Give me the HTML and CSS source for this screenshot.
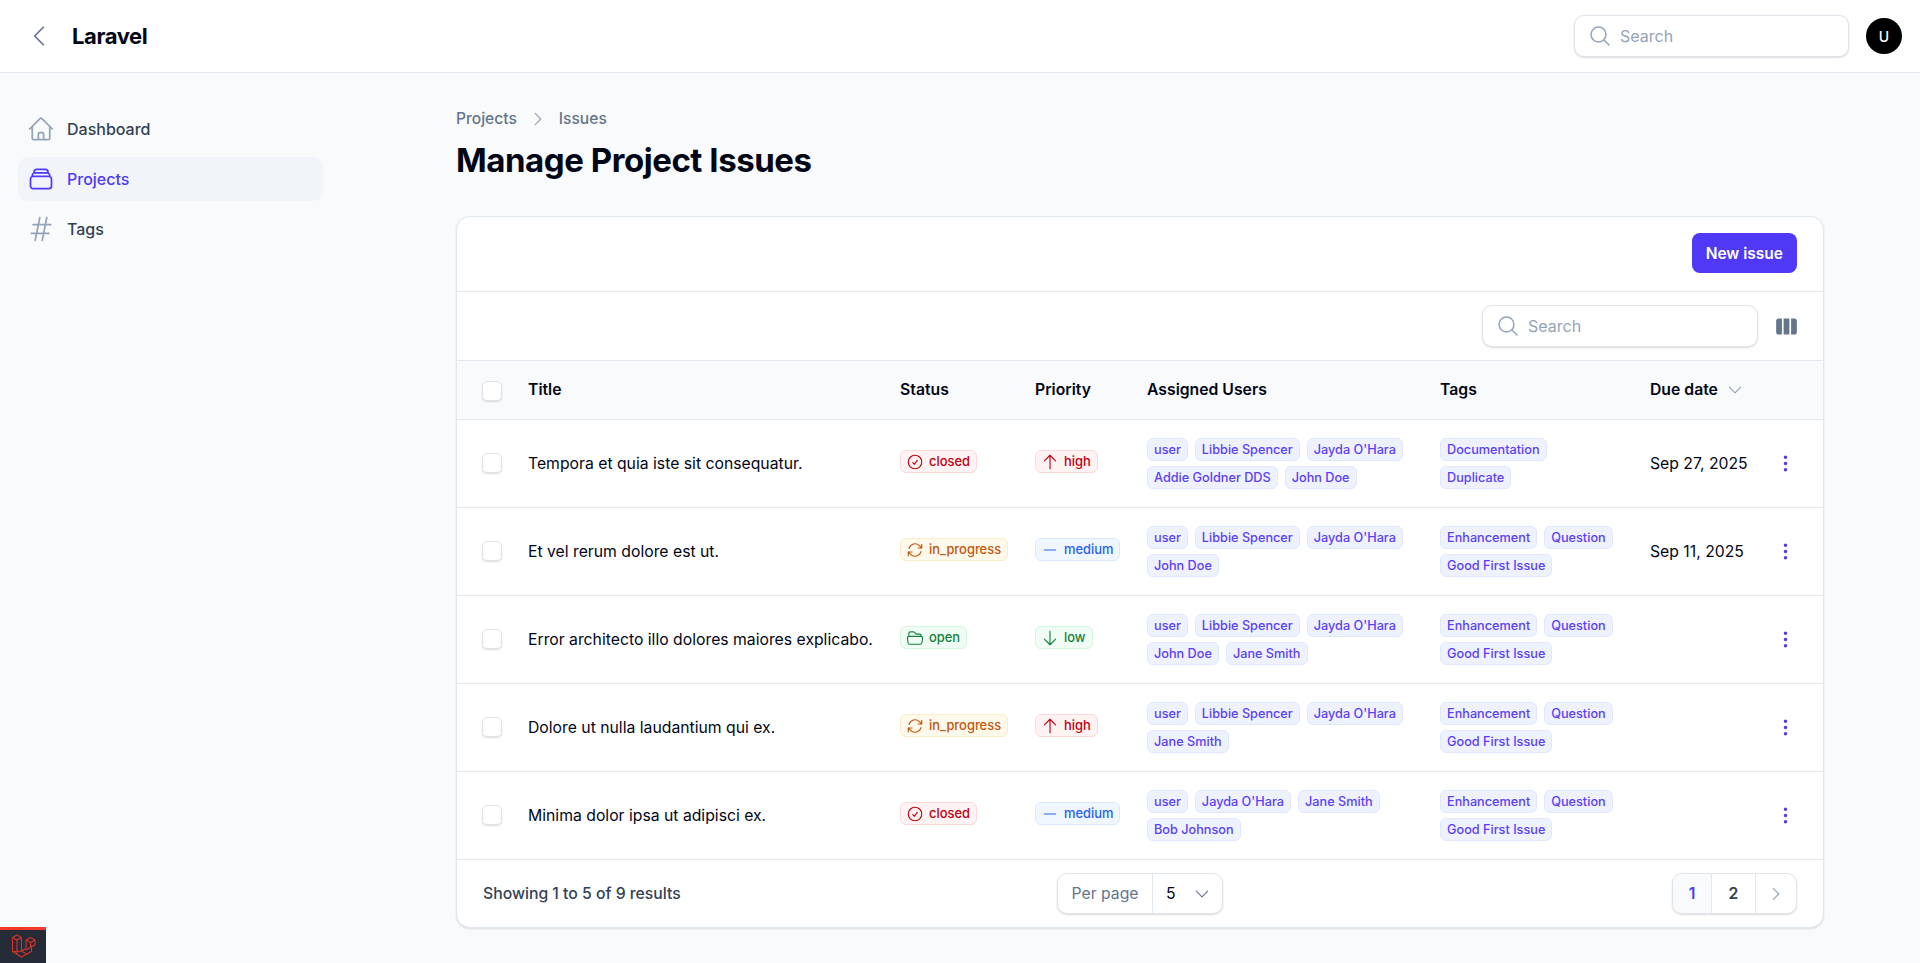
FILE: index.html
```html
<!DOCTYPE html>
<html lang="en">
<head>
    <meta charset="UTF-8">
    <meta name="viewport" content="width=device-width, initial-scale=1.0">
    <title>Manage Project Issues - Laravel</title>
    <link rel="stylesheet" href="styles.css">
</head>
<body>
    <svg class="sprite" xmlns="http://www.w3.org/2000/svg">
        <symbol id="i-home" viewBox="0 0 24 24"><path d="M2.25 12l8.954-8.955c.44-.439 1.152-.439 1.591 0L21.75 12M4.5 9.75v10.125c0 .621.504 1.125 1.125 1.125H9.75v-4.875c0-.621.504-1.125 1.125-1.125h2.25c.621 0 1.125.504 1.125 1.125V21h4.125c.621 0 1.125-.504 1.125-1.125V9.75M8.25 21h8.25"/></symbol>
        <symbol id="i-stack" viewBox="0 0 24 24"><path d="M6 6.878V6a2.25 2.25 0 012.25-2.25h7.5A2.25 2.25 0 0118 6v.878m-12 0c.235-.083.487-.128.75-.128h10.5c.263 0 .515.045.75.128m-12 0A2.25 2.25 0 004.5 9v.878m13.5-3A2.25 2.25 0 0119.5 9v.878m0 0a2.246 2.246 0 00-.75-.128H5.25c-.263 0-.515.045-.75.128m15 0A2.25 2.25 0 0121 12v6a2.25 2.25 0 01-2.25 2.25H5.25A2.25 2.25 0 013 18v-6c0-.98.626-1.813 1.5-2.122"/></symbol>
        <symbol id="i-hash" viewBox="0 0 24 24"><path d="M5.25 8.25h15m-16.5 7.5h15m-1.8-13.5l-3.9 19.5m-2.1-19.5l-3.9 19.5"/></symbol>
        <symbol id="i-search" viewBox="0 0 24 24"><path d="M21 21l-5.197-5.197m0 0A7.5 7.5 0 105.196 5.196a7.5 7.5 0 0010.607 10.607z"/></symbol>
        <symbol id="i-left" viewBox="0 0 24 24"><path d="M15.75 19.5L8.25 12l7.5-7.5"/></symbol>
        <symbol id="i-right" viewBox="0 0 24 24"><path d="M8.25 4.5l7.5 7.5-7.5 7.5"/></symbol>
        <symbol id="i-down" viewBox="0 0 24 24"><path d="M19.5 8.25l-7.5 7.5-7.5-7.5"/></symbol>
        <symbol id="i-check" viewBox="0 0 24 24"><path d="M9 12.75L11.25 15 15 9.75M21 12a9 9 0 11-18 0 9 9 0 0118 0z"/></symbol>
        <symbol id="i-refresh" viewBox="0 0 24 24"><path d="M16.023 9.348h4.992v-.001M2.985 19.644v-4.992m0 0h4.992m-4.993 0l3.181 3.183a8.25 8.25 0 0013.803-3.7M4.031 9.865a8.25 8.25 0 0113.803-3.7l3.181 3.182m0-4.991v4.99"/></symbol>
        <symbol id="i-folder" viewBox="0 0 24 24"><path d="M3.75 9.776c.112-.017.227-.026.344-.026h15.812c.117 0 .232.009.344.026m-16.5 0a2.25 2.25 0 00-1.883 2.542l.857 6a2.25 2.25 0 002.227 1.932H19.05a2.25 2.25 0 002.227-1.932l.857-6a2.25 2.25 0 00-1.883-2.542m-16.5 0V6A2.25 2.25 0 016 3.75h3.879a1.5 1.5 0 011.06.44l2.122 2.12a1.5 1.5 0 001.06.44H18A2.25 2.25 0 0120.25 9v.776"/></symbol>
        <symbol id="i-up-arrow" viewBox="0 0 24 24"><path d="M4.5 10.5L12 3m0 0l7.5 7.5M12 3v18"/></symbol>
        <symbol id="i-down-arrow" viewBox="0 0 24 24"><path d="M19.5 13.5L12 21m0 0l-7.5-7.5M12 21V3"/></symbol>
        <symbol id="i-minus" viewBox="0 0 24 24"><path d="M19.5 12h-15"/></symbol>
        <symbol id="i-columns" viewBox="0 0 20 20"><path d="M14 17h2.75A2.25 2.25 0 0019 14.75v-9.5A2.25 2.25 0 0016.75 3H14v14zM12.5 3h-5v14h5V3zM3.25 3H6v14H3.25A2.25 2.25 0 011 14.75v-9.5A2.25 2.25 0 013.25 3z"/></symbol>
        <symbol id="i-dots" viewBox="0 0 20 20"><path d="M10 3a1.5 1.5 0 110 3 1.5 1.5 0 010-3zM10 8.5a1.5 1.5 0 110 3 1.5 1.5 0 010-3zM11.5 15.5a1.5 1.5 0 10-3 0 1.5 1.5 0 003 0z"/></symbol>
    </svg>

    <header class="topbar">
        <div class="brand">
            <svg class="icon back"><use href="#i-left"/></svg>
            <span class="brand-name">Laravel</span>
        </div>
        <div class="topbar-right">
            <div class="search search-top">
                <svg class="icon"><use href="#i-search"/></svg>
                <span>Search</span>
            </div>
            <div class="avatar">U</div>
        </div>
    </header>

    <div class="layout">
        <nav class="sidebar">
            <a class="nav-item"><svg class="icon"><use href="#i-home"/></svg>Dashboard</a>
            <a class="nav-item active"><svg class="icon"><use href="#i-stack"/></svg>Projects</a>
            <a class="nav-item"><svg class="icon"><use href="#i-hash"/></svg>Tags</a>
        </nav>

        <main class="content">
            <div class="breadcrumbs">
                <span>Projects</span>
                <svg class="icon"><use href="#i-right"/></svg>
                <span>Issues</span>
            </div>
            <h1>Manage Project Issues</h1>

            <section class="card">
                <div class="card-actions">
                    <button class="btn-primary">New issue</button>
                </div>
                <div class="card-filters">
                    <div class="search search-table">
                        <svg class="icon"><use href="#i-search"/></svg>
                        <span>Search</span>
                    </div>
                    <svg class="columns-icon"><use href="#i-columns"/></svg>
                </div>

                <table class="issues">
                    <thead>
                        <tr>
                            <th class="col-check"><span class="checkbox"></span></th>
                            <th class="col-title">Title</th>
                            <th class="col-status">Status</th>
                            <th class="col-priority">Priority</th>
                            <th class="col-users">Assigned Users</th>
                            <th class="col-tags">Tags</th>
                            <th class="col-due"><span class="sort">Due date <svg class="icon"><use href="#i-down"/></svg></span></th>
                            <th class="col-menu"></th>
                        </tr>
                    </thead>
                    <tbody>
                        <tr>
                            <td><span class="checkbox"></span></td>
                            <td>Tempora et quia iste sit consequatur.</td>
                            <td><span class="badge danger"><svg class="icon"><use href="#i-check"/></svg>closed</span></td>
                            <td><span class="badge danger"><svg class="icon"><use href="#i-up-arrow"/></svg>high</span></td>
                            <td><div class="pills"><span class="pill">user</span><span class="pill">Libbie Spencer</span><span class="pill">Jayda O'Hara</span><span class="pill">Addie Goldner DDS</span><span class="pill">John Doe</span></div></td>
                            <td><div class="pills tag-pills"><span class="pill">Documentation</span><span class="pill">Duplicate</span></div></td>
                            <td>Sep 27, 2025</td>
                            <td class="menu"><svg class="dots"><use href="#i-dots"/></svg></td>
                        </tr>
                        <tr>
                            <td><span class="checkbox"></span></td>
                            <td>Et vel rerum dolore est ut.</td>
                            <td><span class="badge warning"><svg class="icon"><use href="#i-refresh"/></svg>in_progress</span></td>
                            <td><span class="badge info"><svg class="icon"><use href="#i-minus"/></svg>medium</span></td>
                            <td><div class="pills"><span class="pill">user</span><span class="pill">Libbie Spencer</span><span class="pill">Jayda O'Hara</span><span class="pill">John Doe</span></div></td>
                            <td><div class="pills tag-pills"><span class="pill">Enhancement</span><span class="pill">Question</span><span class="pill">Good First Issue</span></div></td>
                            <td>Sep 11, 2025</td>
                            <td class="menu"><svg class="dots"><use href="#i-dots"/></svg></td>
                        </tr>
                        <tr>
                            <td><span class="checkbox"></span></td>
                            <td>Error architecto illo dolores maiores explicabo.</td>
                            <td><span class="badge success"><svg class="icon"><use href="#i-folder"/></svg>open</span></td>
                            <td><span class="badge success"><svg class="icon"><use href="#i-down-arrow"/></svg>low</span></td>
                            <td><div class="pills"><span class="pill">user</span><span class="pill">Libbie Spencer</span><span class="pill">Jayda O'Hara</span><span class="pill">John Doe</span><span class="pill">Jane Smith</span></div></td>
                            <td><div class="pills tag-pills"><span class="pill">Enhancement</span><span class="pill">Question</span><span class="pill">Good First Issue</span></div></td>
                            <td></td>
                            <td class="menu"><svg class="dots"><use href="#i-dots"/></svg></td>
                        </tr>
                        <tr>
                            <td><span class="checkbox"></span></td>
                            <td>Dolore ut nulla laudantium qui ex.</td>
                            <td><span class="badge warning"><svg class="icon"><use href="#i-refresh"/></svg>in_progress</span></td>
                            <td><span class="badge danger"><svg class="icon"><use href="#i-up-arrow"/></svg>high</span></td>
                            <td><div class="pills"><span class="pill">user</span><span class="pill">Libbie Spencer</span><span class="pill">Jayda O'Hara</span><span class="pill">Jane Smith</span></div></td>
                            <td><div class="pills tag-pills"><span class="pill">Enhancement</span><span class="pill">Question</span><span class="pill">Good First Issue</span></div></td>
                            <td></td>
                            <td class="menu"><svg class="dots"><use href="#i-dots"/></svg></td>
                        </tr>
                        <tr>
                            <td><span class="checkbox"></span></td>
                            <td>Minima dolor ipsa ut adipisci ex.</td>
                            <td><span class="badge danger"><svg class="icon"><use href="#i-check"/></svg>closed</span></td>
                            <td><span class="badge info"><svg class="icon"><use href="#i-minus"/></svg>medium</span></td>
                            <td><div class="pills"><span class="pill">user</span><span class="pill">Jayda O'Hara</span><span class="pill">Jane Smith</span><span class="pill">Bob Johnson</span></div></td>
                            <td><div class="pills tag-pills"><span class="pill">Enhancement</span><span class="pill">Question</span><span class="pill">Good First Issue</span></div></td>
                            <td></td>
                            <td class="menu"><svg class="dots"><use href="#i-dots"/></svg></td>
                        </tr>
                    </tbody>
                </table>

                <footer class="card-footer">
                    <div class="results">Showing 1 to 5 of 9 results</div>
                    <div class="per-page">
                        <span class="per-label">Per page</span>
                        <span class="per-value">5<svg class="icon"><use href="#i-down"/></svg></span>
                    </div>
                    <div class="pager-wrap">
                        <div class="pager">
                            <span class="page current">1</span>
                            <span class="page">2</span>
                            <span class="page next"><svg class="icon"><use href="#i-right"/></svg></span>
                        </div>
                    </div>
                </footer>
            </section>
        </main>
    </div>

    <div class="debugbar">
        <svg viewBox="0 0 46 31">
            <path d="M12.500 7.500v14l9 5.500 10-5.500v-6M12.500 7.500l4.500-2.500 4.500 2.500v13.500l4.500-2.500M12.500 7.500l4.500 2.500 4.500-2.500M17 10v14.500M21.500 21l-9 .5M21.500 21l5 3M26 18.500V10l4.500-2.500 4.500 2.500v5l-9 5M26 10l4.500 2.500 4.500-2.500M30.500 12.500v5"/>
        </svg>
    </div>
</body>
</html>
```

FILE: styles.css
```css
* {
    box-sizing: border-box;
}
body {
    margin: 0;
    min-height: 963px;
    background-color: #f8fafc;
    color: #020617;
    font-family: Inter, "Noto Sans", sans-serif;
    font-size: 15.75px;
    overflow: hidden;
}
.sprite {
    display: none;
}
.icon {
    width: 24px;
    height: 24px;
    flex: none;
    fill: none;
    stroke: currentColor;
    stroke-width: 1.5;
    stroke-linecap: round;
    stroke-linejoin: round;
}

/* top bar */
.topbar {
    height: 73px;
    display: flex;
    align-items: center;
    justify-content: space-between;
    padding: 0 18px 0 25px;
    background: white;
    border-bottom: 1px solid #e2e8f0;
}
.brand {
    display: flex;
    align-items: center;
    gap: 19px;
}
.back {
    width: 28px;
    height: 28px;
    color: #64748b;
}
.brand-name {
    font-size: 22px;
    font-weight: 700;
    letter-spacing: -0.4px;
}
.topbar-right {
    display: flex;
    align-items: center;
    gap: 17px;
}
.avatar {
    width: 36px;
    height: 36px;
    border-radius: 50%;
    background: black;
    color: white;
    display: flex;
    align-items: center;
    justify-content: center;
    font-size: 14px;
    font-weight: 500;
}

/* search inputs */
.search {
    height: 42px;
    display: flex;
    align-items: center;
    gap: 8px;
    padding: 0 13px;
    background: white;
    border: 1px solid #dfe3ea;
    border-radius: 10px;
    box-shadow: 0 1px 2px rgba(0, 0, 0, 0.14);
    color: #94a3b8;
    font-size: 16px;
}
.search-top {
    width: 275px;
}
.search-table {
    width: 276px;
}

/* page layout */
.layout {
    display: flex;
}
.sidebar {
    width: 456px;
    flex: none;
    padding: 34px 133px 0 18px;
    display: flex;
    flex-direction: column;
    gap: 6px;
}
.nav-item {
    height: 44px;
    display: flex;
    align-items: center;
    gap: 12px;
    padding: 0 9px;
    border-radius: 10px;
    color: #334155;
    font-size: 16px;
    font-weight: 500;
}
.nav-item .icon {
    width: 28px;
    height: 28px;
    color: #94a3b8;
}
.nav-item.active {
    background: #f1f5f9;
    color: #4f39f6;
}
.nav-item.active .icon {
    color: #4f39f6;
}
.content {
    width: 1368px;
}
.breadcrumbs {
    display: flex;
    align-items: center;
    gap: 12px;
    margin-top: 36px;
    color: #64748b;
    font-size: 15.6px;
    font-weight: 500;
}
.breadcrumbs .icon {
    width: 18px;
    height: 18px;
    color: #94a3b8;
}
h1 {
    margin: 12px 0 36px;
    font-size: 33px;
    line-height: 40px;
    font-weight: 700;
    letter-spacing: -0.45px;
}

/* card */
.card {
    background: white;
    border: 1px solid #e2e8f0;
    border-radius: 14px;
    box-shadow: 0 1px 2px rgba(0, 0, 0, 0.12);
    overflow: hidden;
}
.card-actions {
    height: 75px;
    display: flex;
    align-items: center;
    justify-content: flex-end;
    padding: 0 26px 2px;
    border-bottom: 1px solid #e2e8f0;
}
.btn-primary {
    height: 40px;
    padding: 0 14px;
    border: none;
    border-radius: 8px;
    background: #4f39f6;
    color: white;
    font-family: inherit;
    font-size: 15.5px;
    font-weight: 600;
}
.card-filters {
    height: 69px;
    display: flex;
    align-items: center;
    justify-content: flex-end;
    gap: 17px;
    padding: 0 25px;
    border-bottom: 1px solid #e2e8f0;
}
.columns-icon {
    width: 23px;
    height: 23px;
    fill: #64748b;
}

/* table */
.issues {
    width: 100%;
    table-layout: fixed;
    border-collapse: collapse;
}
.issues th {
    height: 58px;
    padding: 0 12px;
    background: #f8fafc;
    text-align: left;
    font-weight: 600;
}
.issues td {
    height: 88px;
    padding: 0 12px;
    border-top: 1px solid #e2e8f0;
}
.col-check {
    width: 59px;
}
.col-title {
    width: 372px;
}
.col-status {
    width: 135px;
}
.col-priority {
    width: 112px;
}
.col-users {
    width: 293px;
}
.col-tags {
    width: 210px;
}
.col-due {
    width: 130px;
}
.issues th.col-check,
.issues td:first-child {
    padding: 0 0 0 25px;
}
.checkbox {
    display: block;
    width: 20px;
    height: 20px;
    background: white;
    border: 1px solid #dfe3ea;
    border-radius: 5px;
    box-shadow: 0 1px 2px rgba(0, 0, 0, 0.14);
}
.issues th .checkbox {
    margin-top: 2px;
}
.sort {
    display: inline-flex;
    align-items: center;
    gap: 8px;
    white-space: nowrap;
}
.sort .icon {
    width: 18px;
    height: 18px;
    color: #94a3b8;
}
.issues td.menu {
    padding: 1px 0 0 6px;
}
.dots {
    display: block;
    width: 23px;
    height: 23px;
    fill: #4f39f6;
}

/* badges */
.badge,
.pill {
    align-items: center;
    border: 1px solid;
    border-radius: 6px;
    font-size: 12.9px;
    font-weight: 450;
    line-height: 21px;
    white-space: nowrap;
}
.badge {
    display: flex;
    width: fit-content;
    margin-bottom: 3px;
    gap: 5px;
    padding: 0 6px 0 5px;
}
.badge .icon {
    width: 18px;
    height: 18px;
}
.danger {
    background: #fef2f2;
    border-color: #fdd8d8;
    color: #c0000f;
}
.warning {
    background: #fff9eb;
    border-color: #fdecc8;
    color: #c2570c;
}
.info {
    background: #eff6ff;
    border-color: #dbe7fe;
    color: #2563eb;
}
.success {
    background: #f0fdf4;
    border-color: #d4f5e0;
    color: #15803d;
}
.pills {
    display: flex;
    flex-wrap: wrap;
    gap: 5px 7px;
}
.tag-pills {
    max-width: 180px;
}
.pill {
    display: inline-flex;
    padding: 0 6px;
    background: #eef2ff;
    border-color: #e0e7ff;
    color: #5b3ff8;
    font-size: 12.7px;
}

/* footer */
.card-footer {
    height: 68px;
    display: grid;
    grid-template-columns: 1fr auto 1fr;
    align-items: center;
    padding: 0 26px;
    border-top: 1px solid #e2e8f0;
}
.results {
    color: #334155;
    font-weight: 500;
}
.per-page,
.pager {
    height: 41px;
    display: flex;
    align-items: stretch;
    background: white;
    border: 1px solid #dfe3ea;
    border-radius: 10px;
    box-shadow: 0 1px 2px rgba(0, 0, 0, 0.14);
    overflow: hidden;
}
.per-label {
    width: 94px;
    display: flex;
    align-items: center;
    justify-content: center;
    color: #64748b;
    white-space: nowrap;
}
.per-value {
    width: 70px;
    display: flex;
    align-items: center;
    justify-content: space-between;
    padding: 0 11px 0 13px;
    border-left: 1px solid #e2e8f0;
}
.per-value .icon {
    width: 18px;
    height: 18px;
    color: #64748b;
}
.pager-wrap {
    display: flex;
    justify-content: flex-end;
}
.page {
    display: flex;
    align-items: center;
    justify-content: center;
    width: 44px;
    color: #334155;
    font-weight: 600;
    border-left: 1px solid #e2e8f0;
}
.page.current {
    width: 38px;
    border-left: none;
    background: #f8fafc;
    color: #4f39f6;
}
.page.next {
    width: 41px;
    color: #94a3b8;
}
.page .icon {
    width: 18px;
    height: 18px;
}

/* debug bar stays fixed in the corner */
.debugbar {
    position: fixed;
    left: 0;
    bottom: 0;
    width: 46px;
    height: 36px;
    background: #252c38;
    border-top: 3px solid #f4392a;
}
.debugbar svg {
    display: block;
    width: 46px;
    height: 31px;
    fill: none;
    stroke: #d9312a;
    stroke-width: 1.1;
    stroke-linejoin: round;
}
```
